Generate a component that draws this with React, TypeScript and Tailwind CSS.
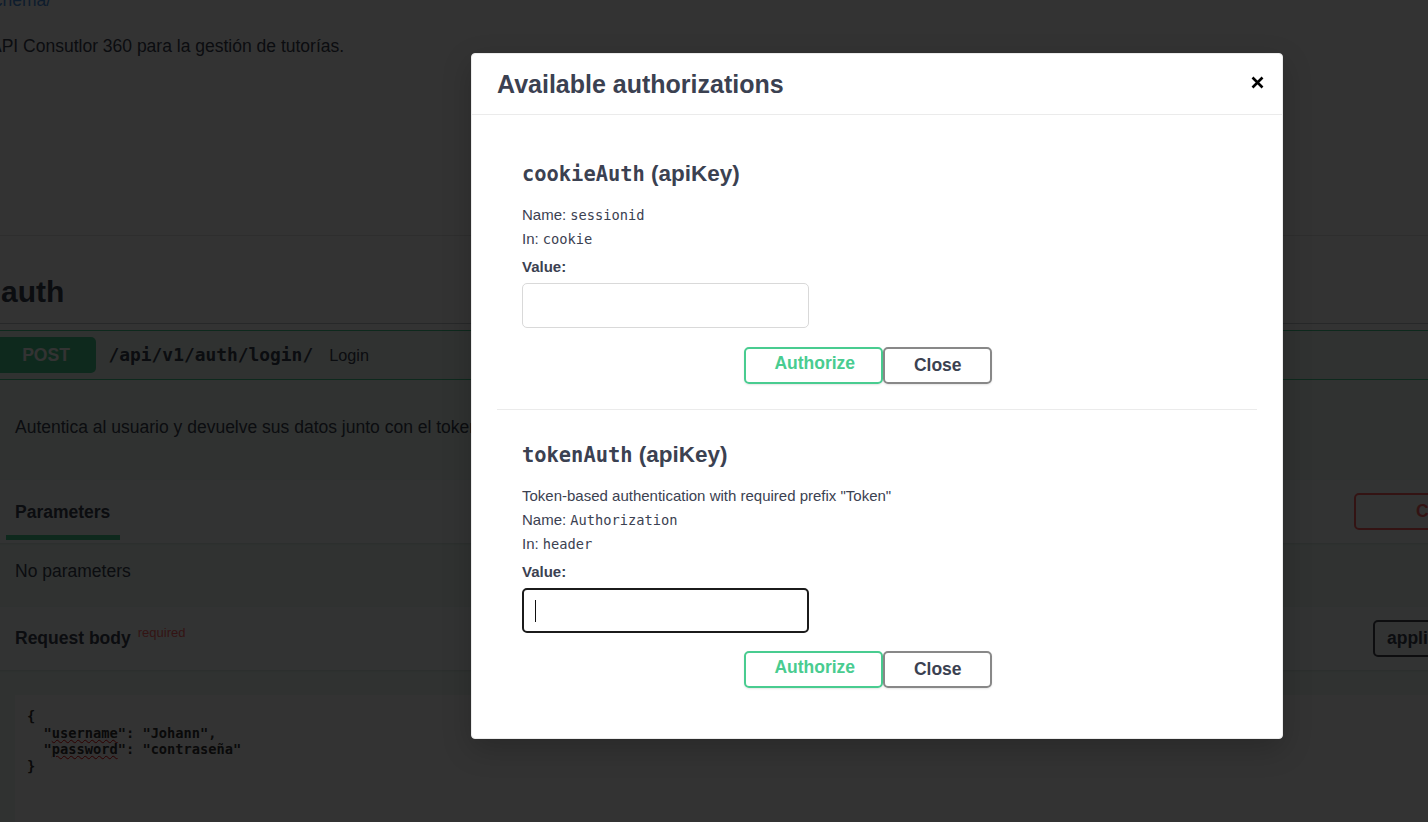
import React from "react";

function AuthSection({
  name,
  desc,
  keyName,
  where,
  focused,
  first,
}: {
  name: string;
  desc?: string;
  keyName: string;
  where: string;
  focused?: boolean;
  first?: boolean;
}) {
  return (
    <div
      className={
        first
          ? "mx-[25px] pl-[25px] pr-[25px] pt-[44px] pb-[25px] border-b border-[#ebebeb]"
          : "mx-[25px] pl-[25px] pr-[25px] pt-[30px]"
      }
    >
      <h4 className="text-[22.5px] leading-[30px] font-bold text-[#3b4151]">
        <code className="font-['DejaVu_Sans_Mono',monospace] text-[20.4px]">{name}</code> (apiKey)
      </h4>
      <div className="mt-[14px] text-[15px] leading-[24px] text-[#3b4151]">
        {desc && <div>{desc}</div>}
        <div>
          Name: <code className="font-['DejaVu_Sans_Mono',monospace] text-[13.7px]">{keyName}</code>
        </div>
        <div>
          In: <code className="font-['DejaVu_Sans_Mono',monospace] text-[13.7px]">{where}</code>
        </div>
      </div>
      <div className="mt-[4px] text-[15px] leading-[24px] font-bold text-[#3b4151]">Value:</div>
      {focused ? (
        <div className="mt-[4px] w-[287px] h-[45px] rounded-[5px] border-2 border-[#1b1b1b] bg-white flex items-center pl-[11px]">
          <span className="block w-[1px] h-[22px] bg-[#111]" />
        </div>
      ) : (
        <div className="mt-[4px] w-[287px] h-[45px] rounded-[5px] border border-[#d9d9d9] bg-white" />
      )}
      <div className={focused ? "mt-[18px] flex justify-center" : "mt-[19px] flex justify-center"}>
        <button className="w-[139px] h-[37px] rounded-[5px] border-2 border-[#49cc90] bg-transparent text-[#49cc90] text-[17.5px] font-bold flex items-center justify-center pl-[2px] pb-[4px] shadow-[0_1px_2px_rgba(0,0,0,0.1)]">
          Authorize
        </button>
        <button className="w-[109px] h-[37px] mr-[17.5px] rounded-[5px] border-2 border-[#888888] bg-transparent text-[#3b4151] text-[17.5px] font-bold flex items-center justify-center shadow-[0_1px_2px_rgba(0,0,0,0.1)]">
          Close
        </button>
      </div>
    </div>
  );
}

export default function App() {
  return (
    <div className="relative w-[1428px] h-[822px] overflow-hidden bg-white font-['Liberation_Sans',Arial,sans-serif] text-[#3b4151]">
      {/* underlying swagger page */}
      <div className="w-[1428px]">
        <div className="h-[236px] flex flex-col border-b border-[#e3e3e3]">
          <a className="block -mt-[10px] ml-[-48px] text-[17.5px] leading-[20px] text-[#4990e2]">/api/schema/</a>
          <p className="mt-[26px] ml-[-10px] text-[17.5px] leading-[20px]">
            API Consutlor 360 para la gestión de tutorías.
          </p>
        </div>

        <h2 className="pt-[38px] pb-[13px] border-b border-[#c4c6cb] text-[30px] leading-[36px] font-bold">
          <span className="ml-[1px]">auth</span>
        </h2>

        <div className="mt-[6px] ml-[-11px] w-[1480px] border border-[#49cc90] bg-[#edfaf4]">
          <div className="h-[49px] flex items-center border-b border-[#49cc90] pl-[6px]">
            <div className="shrink-0 w-[100px] h-[36px] rounded-[5px] bg-[#49cc90] text-white text-[17.5px] font-bold flex items-center justify-center">
              POST
            </div>
            <span className="shrink-0 ml-[12.5px] font-['DejaVu_Sans_Mono',monospace] font-bold text-[17.9px] text-[#3b4151]">
              /api/v1/auth/login/
            </span>
            <span className="shrink-0 ml-[16px] text-[16.25px] text-[#3b4151]">Login</span>
          </div>

          <div className="h-[100px] pl-[25px] pt-[37px] text-[17.5px] leading-[20px] whitespace-nowrap">
            Autentica al usuario y devuelve sus datos junto con el token de autenticación.
          </div>

          <div className="h-[63px] flex bg-[#fbfefd] shadow-[0_1px_2px_rgba(0,0,0,0.1)]">
            <div className="shrink-0 ml-[16px] w-[114px] self-end pb-[3px] flex flex-col">
              <span className="pl-[9px] text-[17.5px] leading-[20px] font-bold">Parameters</span>
              <span className="mt-[13px] h-[5px] bg-[#49cc90]" />
            </div>
            <div className="shrink-0 ml-[1234px] self-center h-[37px] w-[140px] rounded-[5px] border-2 border-[#ff6060] text-[#ff6060] text-[17.5px] font-bold flex items-center pl-[60px]">
              Cancel
            </div>
          </div>

          <div className="h-[64px] pl-[25px] pt-[18px] text-[17.5px] leading-[20px]">No parameters</div>

          <div className="h-[63px] flex pl-[25px] bg-[#fbfefd] shadow-[0_1px_2px_rgba(0,0,0,0.1)]">
            <div className="shrink-0 w-[1358px] pt-[21px] flex items-start">
              <span className="text-[17.5px] leading-[20px] font-bold">Request body</span>
              <span className="ml-[7px] -mt-[3px] text-[13px] leading-[15px] text-[#ff6666]">required</span>
            </div>
            <div className="shrink-0 self-center h-[37px] w-[200px] rounded-[5px] border-2 border-[#41444e] flex items-center pl-[12px] text-[17.5px] font-bold whitespace-nowrap">
              application/json
            </div>
          </div>

          <div className="pt-[25px] pl-[25px] h-[260px]">
            <pre className="w-[1420px] h-[220px] bg-white pl-[12px] pt-[13px] font-['DejaVu_Sans_Mono',monospace] font-bold text-[13.7px] leading-[16.7px] text-[#333]">
              {"{\n  \""}
              <span className="underline decoration-wavy decoration-[#e00000] decoration-1 underline-offset-[1px]">username</span>
              {"\": \"Johann\",\n  \""}
              <span className="underline decoration-wavy decoration-[#e00000] decoration-1 underline-offset-[1px]">password</span>
              {"\": \"contraseña\"\n}"}
            </pre>
          </div>
        </div>
      </div>

      {/* backdrop */}
      <div className="absolute inset-0 bg-black/80" />

      {/* modal */}
      <div className="absolute left-[471px] top-[53px] w-[812px] h-[686px] bg-white border border-[#ebebeb] rounded-[4px] shadow-[0_10px_30px_rgba(0,0,0,0.2)]">
        <div className="h-[61px] border-b border-[#ebebeb] flex items-center justify-between pl-[25px] pr-[18px]">
          <h3 className="text-[25px] leading-[29px] font-bold text-[#3b4151]">Available authorizations</h3>
          <svg width="13" height="13" viewBox="0 0 13 13" className="mb-[3px]">
            <path d="M1.5 1.5 L11.5 11.5 M11.5 1.5 L1.5 11.5" stroke="#000" strokeWidth="2.6" strokeLinecap="butt" />
          </svg>
        </div>
        <AuthSection first name="cookieAuth" keyName="sessionid" where="cookie" />
        <AuthSection
          name="tokenAuth"
          desc={'Token-based authentication with required prefix "Token"'}
          keyName="Authorization"
          where="header"
          focused
        />
      </div>
    </div>
  );
}
